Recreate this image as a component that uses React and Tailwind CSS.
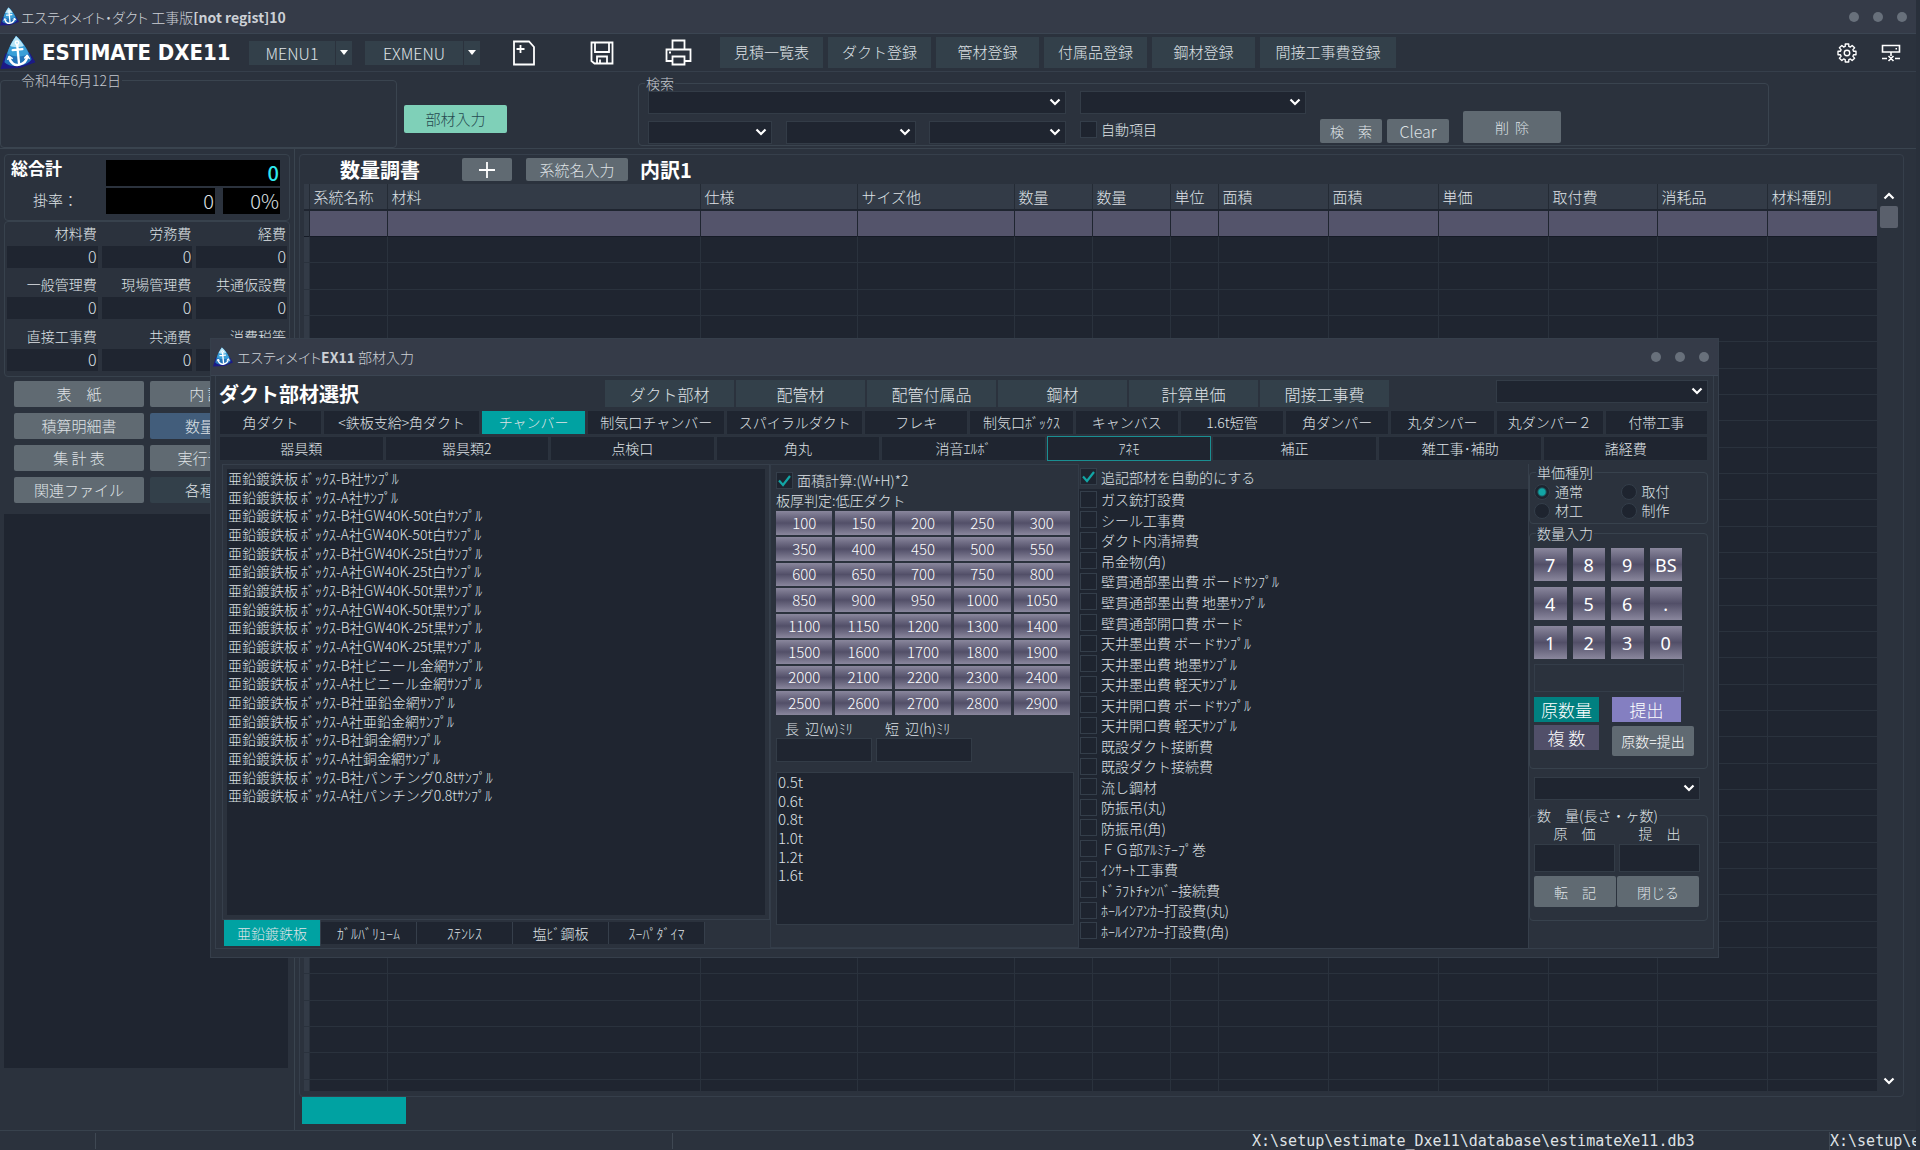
import { useState } from "react";

const MAIN_BUTTONS = [
  { label: "見積一覧表", width: "w-[103px]" },
  { label: "ダクト登録", width: "w-[103px]" },
  { label: "管材登録", width: "w-[103px]" },
  { label: "付属品登録", width: "w-[103px]" },
  { label: "鋼材登録", width: "w-[103px]" },
  { label: "間接工事費登録", width: "w-[136px]" },
];

const COLUMNS = [
  { label: "系統名称", width: "w-[78px]" },
  { label: "材料", width: "" },
  { label: "仕様", width: "w-[157px]" },
  { label: "サイズ他", width: "w-[157px]" },
  { label: "数量", width: "w-[78px]" },
  { label: "数量", width: "w-[78px]" },
  { label: "単位", width: "w-[48px]" },
  { label: "面積", width: "w-[110px]" },
  { label: "面積", width: "w-[110px]" },
  { label: "単価", width: "w-[110px]" },
  { label: "取付費", width: "w-[109px]" },
  { label: "消耗品", width: "w-[110px]" },
  { label: "材料種別", width: "w-[110px]" },
];

const COSTS = [
  "材料費", "労務費", "経費",
  "一般管理費", "現場管理費", "共通仮設費",
  "直接工事費", "共通費", "消費税等",
];

const SIDE_BUTTONS = [
  { label: "表　紙", color: "bg-[#606a72]" },
  { label: "内 訳 書", color: "bg-[#606a72]" },
  { label: "積算明細書", color: "bg-[#606a72]" },
  { label: "数量調書", color: "bg-[#425d7b]" },
  { label: "集 計 表", color: "bg-[#606a72]" },
  { label: "実行予算書", color: "bg-[#606a72]" },
  { label: "関連ファイル", color: "bg-[#606a72]" },
  { label: "各種設定", color: "bg-[#33404a]" },
];

const CATEGORIES = ["ダクト部材", "配管材", "配管付属品", "鋼材", "計算単価", "間接工事費"];

const PART_TABS = [
  "角ダクト", "<鉄板支給>角ダクト", "チャンバー", "制気口チャンバー", "スパイラルダクト", "フレキ",
  "制気口ﾎﾞｯｸｽ", "キャンバス", "1.6t短管", "角ダンパー", "丸ダンパー", "丸ダンパー２", "付帯工事",
];

const SUB_TABS = ["器具類", "器具類2", "点検口", "角丸", "消音ｴﾙﾎﾞ", "ｱﾈﾓ", "補正", "雑工事･補助", "諸経費"];

const PARTS = [
  "亜鉛鍍鉄板 ﾎﾞｯｸｽ-B社ｻﾝﾌﾟﾙ",
  "亜鉛鍍鉄板 ﾎﾞｯｸｽ-A社ｻﾝﾌﾟﾙ",
  "亜鉛鍍鉄板 ﾎﾞｯｸｽ-B社GW40K-50t白ｻﾝﾌﾟﾙ",
  "亜鉛鍍鉄板 ﾎﾞｯｸｽ-A社GW40K-50t白ｻﾝﾌﾟﾙ",
  "亜鉛鍍鉄板 ﾎﾞｯｸｽ-B社GW40K-25t白ｻﾝﾌﾟﾙ",
  "亜鉛鍍鉄板 ﾎﾞｯｸｽ-A社GW40K-25t白ｻﾝﾌﾟﾙ",
  "亜鉛鍍鉄板 ﾎﾞｯｸｽ-B社GW40K-50t黒ｻﾝﾌﾟﾙ",
  "亜鉛鍍鉄板 ﾎﾞｯｸｽ-A社GW40K-50t黒ｻﾝﾌﾟﾙ",
  "亜鉛鍍鉄板 ﾎﾞｯｸｽ-B社GW40K-25t黒ｻﾝﾌﾟﾙ",
  "亜鉛鍍鉄板 ﾎﾞｯｸｽ-A社GW40K-25t黒ｻﾝﾌﾟﾙ",
  "亜鉛鍍鉄板 ﾎﾞｯｸｽ-B社ビニール金網ｻﾝﾌﾟﾙ",
  "亜鉛鍍鉄板 ﾎﾞｯｸｽ-A社ビニール金網ｻﾝﾌﾟﾙ",
  "亜鉛鍍鉄板 ﾎﾞｯｸｽ-B社亜鉛金網ｻﾝﾌﾟﾙ",
  "亜鉛鍍鉄板 ﾎﾞｯｸｽ-A社亜鉛金網ｻﾝﾌﾟﾙ",
  "亜鉛鍍鉄板 ﾎﾞｯｸｽ-B社銅金網ｻﾝﾌﾟﾙ",
  "亜鉛鍍鉄板 ﾎﾞｯｸｽ-A社銅金網ｻﾝﾌﾟﾙ",
  "亜鉛鍍鉄板 ﾎﾞｯｸｽ-B社パンチング0.8tｻﾝﾌﾟﾙ",
  "亜鉛鍍鉄板 ﾎﾞｯｸｽ-A社パンチング0.8tｻﾝﾌﾟﾙ",
];

const MATERIALS = ["亜鉛鍍鉄板", "ｶﾞﾙﾊﾞﾘｭｰﾑ", "ｽﾃﾝﾚｽ", "塩ﾋﾞ鋼板", "ｽｰﾊﾟﾀﾞｲﾏ"];

const SIZES = [
  100, 150, 200, 250, 300, 350, 400, 450, 500, 550, 600, 650, 700, 750, 800, 850, 900, 950, 1000, 1050,
  1100, 1150, 1200, 1300, 1400, 1500, 1600, 1700, 1800, 1900, 2000, 2100, 2200, 2300, 2400, 2500, 2600,
  2700, 2800, 2900,
];

const THICKNESSES = ["0.5t", "0.6t", "0.8t", "1.0t", "1.2t", "1.6t"];

const EXTRAS = [
  "ガス銃打設費", "シール工事費", "ダクト内清掃費", "吊金物(角)",
  "壁貫通部墨出費 ボードｻﾝﾌﾟﾙ", "壁貫通部墨出費 地墨ｻﾝﾌﾟﾙ", "壁貫通部開口費 ボード",
  "天井墨出費 ボードｻﾝﾌﾟﾙ", "天井墨出費 地墨ｻﾝﾌﾟﾙ", "天井墨出費 軽天ｻﾝﾌﾟﾙ",
  "天井開口費 ボードｻﾝﾌﾟﾙ", "天井開口費 軽天ｻﾝﾌﾟﾙ",
  "既設ダクト接断費", "既設ダクト接続費", "流し鋼材", "防振吊(丸)", "防振吊(角)",
  "ＦＧ部ｱﾙﾐﾃｰﾌﾟ巻", "ｲﾝｻｰﾄ工事費", "ﾄﾞﾗﾌﾄﾁｬﾝﾊﾞｰ接続費",
  "ﾎｰﾙｲﾝｱﾝｶｰ打設費(丸)", "ﾎｰﾙｲﾝｱﾝｶｰ打設費(角)",
];

const KEYS = ["7", "8", "9", "BS", "4", "5", "6", ".", "1", "2", "3", "0"];

const gearPath = (() => {
  const points = [];
  for (let i = 0; i < 8; i++) {
    const mid = (i * Math.PI) / 4;
    [[-0.27, 7.4], [-0.19, 10], [0.19, 10], [0.27, 7.4]].forEach(([offset, r]) => {
      const x = 12 + r * Math.sin(mid + offset);
      const y = 12 - r * Math.cos(mid + offset);
      points.push(`${x.toFixed(2)} ${y.toFixed(2)}`);
    });
  }
  return `M${points.join("L")}Z`;
})();

const Logo = ({ className }) => (
  <svg viewBox="0 0 36 34" className={className} aria-hidden="true">
    <path d="M5 18 0 34 20 33 36 27 30 17Z" fill="#1c1a86" />
    <path d="M16 0C22 5 29 15 32 24 28 31 11 34 4 27 6 17 11 7 16 0Z" fill="#2273b9" />
    <path d="M16 0C21 4 26 11 29 18 24 22 13 22 7 18 9 11 12 5 16 0Z" fill="#3a9fd8" />
    <path d="M16 0C19 3 22 6 24 10 20 12 13 12 10 10 12 6 14 3 16 0Z" fill="#b4e4f7" />
    <g fill="none" stroke="#fff" strokeLinecap="round" strokeLinejoin="round">
      <circle cx="17" cy="7" r="1.8" strokeWidth="1.5" />
      <path d="M17.200 9.500 19 28M12.500 14.500 22.500 13.500" strokeWidth="2.400" />
      <path d="M9 22C10 28 15 31 19.500 29.500 24 28.500 27 25 27.500 21" strokeWidth="2.600" />
      <path d="M7.500 24 9 21 12 23M25 22.500 27.500 20 29.500 23" strokeWidth="1.600" />
    </g>
  </svg>
);

const Dots = () => (
  <div className="flex gap-[14px]">
    {["最小化", "最大化", "閉じる"].map((name) => (
      <button key={name} type="button" aria-label={name} className="size-[10px] rounded-full bg-[#68707b]" />
    ))}
  </div>
);

const Chevron = ({ className = "", up = false }) => (
  <svg viewBox="0 0 12 8" className={`h-2 w-3 ${className}`} fill="none" stroke="#fff" strokeWidth="2.2" aria-hidden="true">
    <path d={up ? "M1.500 6.500 6 2 10.500 6.500" : "M1.500 1.500 6 6 10.500 1.500"} />
  </svg>
);

const DarkSelect = ({ label, className }) => (
  <div className={`relative h-[23px] ${className}`}>
    <select aria-label={label} className="block h-full w-full appearance-none border border-[#333c47] bg-[#1f2530] px-2 text-sm">
      <option value="" />
    </select>
    <Chevron className="pointer-events-none absolute right-[5px] top-[7px]" />
  </div>
);

const Check = ({ label, checked, onChange, className = "" }) => (
  <label className={`flex items-center gap-1 whitespace-nowrap text-sm leading-[18px] ${className}`}>
    <span className="relative size-[17px] shrink-0">
      <input
        type="checkbox"
        checked={checked}
        onChange={onChange}
        className="block size-full appearance-none border border-[#343e4a] bg-[#1e242f]"
      />
      {checked && (
        <svg viewBox="0 0 17 17" className="pointer-events-none absolute inset-0" fill="none" stroke="#12a5a5" strokeWidth="2.2" aria-hidden="true">
          <path d="M3 8.500 7 13 14 4" />
        </svg>
      )}
    </span>
    {label}
  </label>
);

const MenuButton = ({ label, width }) => (
  <button type="button" className={`flex h-6 items-center bg-[#33404a] text-base leading-[22px] ${width}`}>
    <span className="flex-1 text-center">{label}</span>
    <span className="flex h-full w-[17px] items-center justify-center border-l border-[#2b323d]">
      <svg viewBox="0 0 8 5" className="h-[5px] w-2" fill="#fff" aria-hidden="true"><path d="M0 0h8L4 5z" /></svg>
    </span>
  </button>
);

const GrayButton = ({ children, className = "" }) => (
  <button type="button" className={`rounded-[2px] bg-[#606a72] text-center whitespace-pre ${className}`}>{children}</button>
);

const TopBar = () => (
  <>
    <header className="flex h-[34px] shrink-0 items-center border-b border-[#3b4552] bg-[#353b48] pr-[9px]">
      <Logo className="mr-[2px] h-[19px] w-[19px]" />
      <h1 className="flex-1 text-sm text-[#ccd0d6] [font-feature-settings:'palt']">
        エスティメイト・ダクト 工事版<b className="font-bold">[not regist]10</b>
      </h1>
      <Dots />
    </header>
    <nav className="flex h-[38px] shrink-0 items-center border-b border-[#363f4b]">
      <Logo className="h-[33px] w-9" />
      <span className="ml-[6px] w-[207px] whitespace-nowrap font-['DejaVu_Sans_Condensed','DejaVu_Sans',sans-serif] text-[22px] font-bold leading-7 text-white">ESTIMATE DXE11</span>
      <MenuButton label="MENU1" width="w-[103px]" />
      <MenuButton label="EXMENU" width="ml-[13px] w-[115px]" />
      <button type="button" aria-label="新規" className="ml-[33px]">
        <svg viewBox="0 0 22 26" className="h-[26px] w-[22px]" fill="none" stroke="#fff" strokeWidth="1.8" aria-hidden="true">
          <path d="M1 1.500H16L21 7V24.500H1ZM7.500 5V13M3.500 9H11.500" />
        </svg>
      </button>
      <button type="button" aria-label="保存" className="ml-[55px]">
        <svg viewBox="0 0 24 24" className="size-6" fill="none" stroke="#fff" strokeWidth="1.800" aria-hidden="true">
          <path d="M1.500 1.500H22.500V22.500H4.500L1.500 20ZM5 1.500V11H19V1.500M7 22.500V15.500H17V22.500M10 18.500V22.500" />
        </svg>
      </button>
      <button type="button" aria-label="印刷" className="ml-[51px]">
        <svg viewBox="0 0 27 27" className="size-[27px]" fill="none" stroke="#fff" strokeWidth="1.800" aria-hidden="true">
          <path d="M7.500 10.500V1.500H19.500V10.500M7.500 22H1.500V10.500H25.500V22H19.500M7.500 17.500H19.500V25.500H7.500ZM4 13.500H6" />
        </svg>
      </button>
      <div className="ml-7 flex gap-[5px]">
        {MAIN_BUTTONS.map((b) => (
          <button key={b.label} type="button" className={`h-[31px] bg-[#33404a] text-[15px] ${b.width}`}>{b.label}</button>
        ))}
      </div>
      <button type="button" aria-label="設定" className="ml-auto">
        <svg viewBox="0 0 24 24" className="size-[22px]" fill="none" stroke="#fff" strokeWidth="1.500" strokeLinejoin="round" aria-hidden="true">
          <path d={gearPath} />
          <circle cx="12" cy="12" r="3" />
        </svg>
      </button>
      <button type="button" aria-label="接続" className="ml-[23px] mr-[15px]">
        <svg viewBox="0 0 20 18" className="h-[18px] w-5" fill="none" stroke="#fff" strokeWidth="1.600" aria-hidden="true">
          <path d="M1.500 1.500H18.500V8H1.500ZM10 8V12M1 14.500H6M14 14.500H19M7.500 12 12.500 17M12.500 12 7.500 17M14.500 4.800H16" />
        </svg>
      </button>
    </nav>
  </>
);

const SearchBar = () => (
  <section className="flex h-[77px] shrink-0 items-start border-b border-[#3a444f]">
    <fieldset className="h-[76px] w-[397px] rounded-sm border border-[#3a444f]">
      <legend className="ml-[19px] px-px text-sm leading-4 text-[#c3c8ce]">令和4年6月12日</legend>
    </fieldset>
    <button type="button" className="ml-[7px] mt-[33px] h-7 w-[103px] rounded-[2px] bg-[#7fd0b8] text-[15px] text-[#264a50]">部材入力</button>
    <fieldset className="ml-[131px] mt-[3px] h-[71px] w-[1131px] rounded-sm border border-[#3a444f]">
      <legend className="ml-[6px] px-px text-sm leading-4 text-[#c3c8ce]">検索</legend>
      <div className="flex pl-[9px]">
        <div className="w-[418px]">
          <DarkSelect label="検索条件" className="w-full" />
          <div className="mt-[7px] flex justify-between">
            <DarkSelect label="条件1" className="w-[124px]" />
            <DarkSelect label="条件2" className="w-[130px]" />
            <DarkSelect label="条件3" className="w-[137px]" />
          </div>
        </div>
        <div className="ml-[14px] w-[226px]">
          <DarkSelect label="分類" className="w-full" />
          <Check label="自動項目" checked={false} onChange={() => {}} className="mt-[6px]" />
        </div>
        <GrayButton className="ml-[14px] mt-7 h-6 w-[62px] text-sm">検　索</GrayButton>
        <GrayButton className="ml-[5px] mt-7 h-6 w-[62px] text-base leading-5">Clear</GrayButton>
        <GrayButton className="ml-[14px] mt-5 h-8 w-[98px] text-sm">削  除</GrayButton>
      </div>
    </fieldset>
  </section>
);

const Sidebar = () => (
  <aside className="flex w-[295px] shrink-0 flex-col border-r border-[#3a444f] px-1 pb-[62px] pt-[5px]">
    <div className="flex h-[67px] w-[286px] justify-between rounded-sm border border-[#38424d] pl-[6px] pr-[9px] pt-[5px]">
      <div>
        <div className="text-[17px] font-bold leading-4 text-white">総合計</div>
        <div className="ml-[22px] mt-3 text-[15px] leading-6">掛率：</div>
      </div>
      <div className="w-[174px] text-xl leading-[26px]">
        <div className="bg-black px-px text-right font-medium text-[#2fe9ee]">0</div>
        <div className="mt-[2px] flex justify-between">
          <div className="w-[109px] bg-black px-px text-right">0</div>
          <div className="w-[57px] bg-black px-px text-right">0%</div>
        </div>
      </div>
    </div>
    <dl className="grid h-[156px] w-[286px] grid-cols-3 gap-x-1 rounded-sm border border-[#38424d] px-[2px]">
      {COSTS.map((name) => (
        <div key={name}>
          <dt className="pb-[2px] pr-px text-right text-sm leading-[22px]">{name}</dt>
          <dd className="h-[22px] bg-[#1f2530] px-px text-right text-base leading-5">0</dd>
        </div>
      ))}
    </dl>
    <div className="mt-1 grid grid-cols-[130px_130px] gap-[6px] pl-[10px]">
      {SIDE_BUTTONS.map((b) => (
        <button key={b.label} type="button" className={`h-[26px] rounded-[2px] text-[15px] whitespace-pre ${b.color}`}>{b.label}</button>
      ))}
    </div>
    <div className="mt-[11px] w-[284px] flex-1 bg-[#1f2530]" />
  </aside>
);

const Ledger = () => (
  <main className="flex min-w-0 flex-1 flex-col px-1 pb-[6px] pt-[5px]">
    <section className="mr-[8px] flex min-h-0 flex-1 flex-col rounded-sm border border-[#363f4b] pl-1 pr-[5px]">
      <div className="flex h-[29px] shrink-0 items-center">
        <h2 className="ml-9 w-[122px] text-xl font-bold leading-6 text-white">数量調書</h2>
        <button type="button" aria-label="追加" className="flex h-[23px] w-[50px] items-center justify-center rounded-[2px] bg-[#606a72]">
          <svg viewBox="0 0 16 16" className="size-4" stroke="#fff" strokeWidth="1.800" aria-hidden="true"><path d="M8 0V16M0 8H16" /></svg>
        </button>
        <GrayButton className="ml-[14px] h-[23px] w-[102px] text-[15px] leading-[22px]">系統名入力</GrayButton>
        <h2 className="ml-3 text-xl font-bold leading-6 text-white">内訳1</h2>
      </div>
      <div className="flex min-h-0 flex-1">
        <div className="mb-[5px] min-w-0 flex-1 overflow-hidden bg-[#1f2530]">
          <table className="w-full table-fixed border-collapse">
            <thead>
              <tr className="h-[26px] border-b-2 border-[#1f2530] bg-[#333b47]">
                <th className="w-[5px]" />
                {COLUMNS.map((c, i) => (
                  <th key={i} className={`border-l border-[#242b35] px-1 text-left text-[15px] font-light leading-6 ${c.width}`}>{c.label}</th>
                ))}
              </tr>
            </thead>
            <tbody>
              <tr className="h-[26px] border-b border-[#151b26] bg-[#54546b]">
                <td className="bg-[#333b47]" />
                {COLUMNS.map((c, i) => (
                  <td key={i} className="border-l border-[#1f2530]" />
                ))}
              </tr>
              {Array.from({ length: 33 }, (_, row) => (
                <tr key={row} className="h-[26px] border-b border-[#2a323d] nth-[3n]:h-[27px]">
                  <td className="bg-[#333b47]" />
                  {COLUMNS.map((c, i) => (
                    <td key={i} className="border-l border-[#2a323d]" />
                  ))}
                </tr>
              ))}
            </tbody>
          </table>
        </div>
        <div className="ml-[3px] flex w-[18px] shrink-0 flex-col items-center pb-[11px] pt-2">
          <Chevron up />
          <div className="mt-[6px] h-[22px] w-full rounded-[2px] bg-[#5a606c]" />
          <Chevron className="mt-auto" />
        </div>
      </div>
    </section>
    <button type="button" aria-label="内訳1" className="ml-[3px] h-[27px] w-[104px] shrink-0 bg-[#00a2a2]" />
  </main>
);

const tabBase = "h-[25px] border text-center text-sm leading-[21px] whitespace-nowrap";

const PartTabs = () => {
  const [part, setPart] = useState("チャンバー");
  const [sub, setSub] = useState("ｱﾈﾓ");

  return (
    <>
      <div className="grid grid-cols-[104fr_158fr_106fr_139fr_138fr_105fr_105fr_105fr_105fr_105fr_105fr_109fr_104fr] gap-x-px">
        {PART_TABS.map((t) => (
          <button key={t} type="button" onClick={() => setPart(t)} className={`${tabBase} border-[#2b333e] ${t === part ? "bg-[#00a2a2]" : "bg-[#1f2530]"}`}>
            {t}
          </button>
        ))}
      </div>
      <div className="mt-px grid grid-cols-9 gap-x-px">
        {SUB_TABS.map((t) => (
          <button key={t} type="button" onClick={() => setSub(t)} className={`${tabBase} bg-[#1f2530] ${t === sub ? "border-[#1a8f92]" : "border-[#2b333e]"}`}>
            {t}
          </button>
        ))}
      </div>
    </>
  );
};

const PartList = () => (
  <section className="w-[548px] shrink-0">
    <div className="h-[456px] border border-[#363f4b] p-1">
      <ul className="h-full bg-[#1f2530] pl-px">
        <li className="grid h-[336px] auto-rows-fr">
          {PARTS.map((p) => (
            <span key={p} className="text-sm leading-[18px]">{p}</span>
          ))}
        </li>
      </ul>
    </div>
    <div className="ml-[2px] flex items-center">
      {MATERIALS.map((m, i) => (
        <button
          key={m}
          type="button"
          className={`border-r border-[#363f4b] text-sm leading-[18px] whitespace-nowrap ${i === 0 ? "h-[26px] w-[97px] bg-[#00a2a2]" : "h-[22px] w-24 bg-[#1f2530]"}`}
        >
          {m}
        </button>
      ))}
    </div>
  </section>
);

const silver = "bg-linear-to-b from-[#8a879d] via-[#524f68] to-[#8a879d]";

const SizePanel = () => {
  const [calcArea, setCalcArea] = useState(true);

  return (
    <section className="w-[309px] shrink-0 border border-[#333c48] pl-[5px] pr-1 pt-[6px]">
      <Check label="面積計算:(W+H)*2" checked={calcArea} onChange={() => setCalcArea(!calcArea)} />
      <p className="mt-px text-sm leading-5">板厚判定:低圧ダクト</p>
      <div className="mt-px grid h-[204px] w-[294px] grid-cols-5 grid-rows-8 gap-x-[3px] gap-y-[2px]">
        {SIZES.map((s) => (
          <button key={s} type="button" className={`text-[15px] leading-5 text-white ${silver}`}>{s}</button>
        ))}
      </div>
      <div className="mt-[3px] flex gap-[4px] text-sm leading-5 whitespace-pre">
        <label className="w-[96px]">
          <span className="ml-[9px]">長  辺(w)ﾐﾘ</span>
          <input type="text" className="block h-6 w-full border border-[#333c47] bg-[#1f2530] px-1" />
        </label>
        <label className="w-[96px]">
          <span className="ml-[9px]">短  辺(h)ﾐﾘ</span>
          <input type="text" className="block h-6 w-full border border-[#333c47] bg-[#1f2530] px-1" />
        </label>
      </div>
      <ul className="mt-[10px] h-[153px] border border-[#333c47] bg-[#1f2530] pl-px">
        <li className="grid h-28 auto-rows-fr">
          {THICKNESSES.map((t) => (
            <span key={t} className="text-[15px] leading-[18px]">{t}</span>
          ))}
        </li>
      </ul>
    </section>
  );
};

const ExtrasPanel = () => {
  const [auto, setAuto] = useState(true);
  const [picked, setPicked] = useState([]);

  const toggle = (name) =>
    setPicked((prev) => (prev.includes(name) ? prev.filter((p) => p !== name) : [...prev, name]));

  return (
    <section className="flex min-w-0 flex-1 flex-col">
      <Check label="追記部材を自動的にする" checked={auto} onChange={() => setAuto(!auto)} className="h-[25px] pl-px" />
      <div className="flex-1 bg-[#1f2530] pl-px">
        <div className="grid h-[452px] auto-rows-fr">
          {EXTRAS.map((e) => (
            <Check key={e} label={e} checked={picked.includes(e)} onChange={() => toggle(e)} />
          ))}
        </div>
      </div>
    </section>
  );
};

const PriceKind = () => {
  const [kind, setKind] = useState("通常");

  return (
    <fieldset className="h-[60px] rounded-sm border border-[#38424d]">
      <legend className="ml-[6px] px-px text-sm leading-4">単価種別</legend>
      <div className="grid grid-cols-2 pl-1 pt-[2px]">
        {["通常", "取付", "材工", "制作"].map((k) => (
          <label key={k} className="flex items-center gap-[5px] text-sm leading-[19px]">
            <input
              type="radio"
              name="kind"
              checked={kind === k}
              onChange={() => setKind(k)}
              className="size-4 appearance-none rounded-full border border-[#343e4a] bg-[#1e242f] checked:bg-[radial-gradient(#12a5a5_0_3px,#1e242f_5px)]"
            />
            {k}
          </label>
        ))}
      </div>
    </fieldset>
  );
};

const EntryPanel = () => (
  <section className="w-[180px] shrink-0 border-l border-[#363f4b]">
    <PriceKind />
    <fieldset className="mt-px h-[244px] rounded-sm border border-[#38424d]">
      <legend className="ml-[6px] px-px text-sm leading-4">数量入力</legend>
      <div className="ml-1 mt-[7px] grid w-[148px] grid-cols-4 gap-x-[6px] gap-y-[6px]">
        {KEYS.map((k) => (
          <button key={k} type="button" className={`h-[33px] font-['Noto_Sans',sans-serif] text-lg font-normal text-white ${silver}`}>{k}</button>
        ))}
      </div>
      <div className="ml-1 mt-[5px] h-7 w-[150px] border border-[#343d49]" />
      <div className="ml-1 mt-[5px] flex gap-[13px] text-[17px] leading-6 text-white">
        <div className="flex w-[65px] flex-col gap-[3px]">
          <button type="button" className="h-[25px] bg-[#008080]">原数量</button>
          <button type="button" className="h-[25px] bg-[#514f69]">複 数</button>
        </div>
        <div className="flex flex-col items-start gap-1">
          <button type="button" className="h-[25px] w-[69px] bg-[#847fc1]">提出</button>
          <GrayButton className="h-[30px] w-[82px] text-sm">原数=提出</GrayButton>
        </div>
      </div>
    </fieldset>
    <DarkSelect label="数量区分" className="ml-[5px] mt-[8px] w-[166px]" />
    <fieldset className="mt-[7px] h-[114px] rounded-sm border border-[#38424d]">
      <legend className="ml-[6px] px-px text-sm leading-4">数　量(長さ・ヶ数)</legend>
      <div className="ml-1 flex w-[166px] gap-1 text-center text-sm leading-[21px]">
        <label className="flex-1">
          原　価
          <input type="text" className="block h-7 w-full border border-[#333c47] bg-[#1f2530] px-1" />
        </label>
        <label className="flex-1">
          提　出
          <input type="text" className="block h-7 w-full border border-[#333c47] bg-[#1f2530] px-1" />
        </label>
      </div>
      <div className="ml-1 mt-1 flex gap-px text-sm">
        <GrayButton className="h-[31px] w-[82px]">転　記</GrayButton>
        <GrayButton className="h-[31px] w-[82px]">閉じる</GrayButton>
      </div>
    </fieldset>
  </section>
);

const PartsDialog = () => (
  <div role="dialog" aria-label="部材入力" className="absolute left-[210px] top-[338px] w-[1509px] border border-[#363f4b] bg-[#2b323d]">
    <header className="flex h-[37px] items-center border-b border-[#3b4552] bg-[#353b48] pl-[2px] pr-[9px]">
      <Logo className="mr-1 size-5" />
      <h2 className="flex-1 text-sm leading-[18px] text-[#ccd0d6] [font-feature-settings:'palt']">
        エスティメイト<b className="font-bold">EX11</b> 部材入力
      </h2>
      <Dots />
    </header>
    <div className="mx-1 mb-2 border-x border-b border-[#363f4b] pl-[3px] pr-[5px] pt-1">
      <div className="mb-[2px] flex h-7 items-start">
        <h3 className="w-[386px] text-xl font-bold leading-[27px] text-white">ダクト部材選択</h3>
        <div className="flex gap-[2px]">
          {CATEGORIES.map((c) => (
            <button key={c} type="button" className="h-[27px] w-[129px] bg-[#33404a] text-base leading-6">{c}</button>
          ))}
        </div>
        <DarkSelect label="部材区分" className="ml-auto w-[212px]" />
      </div>
      <PartTabs />
      <div className="mt-[3px] flex h-[484px] pl-[3px]">
        <PartList />
        <SizePanel />
        <ExtrasPanel />
        <EntryPanel />
      </div>
    </div>
  </div>
);

const StatusBar = () => (
  <footer className="flex h-5 shrink-0 items-center overflow-hidden border-t border-[#38424d] font-['DejaVu_Sans_Mono',monospace] text-[15px] leading-[18px] whitespace-nowrap">
    <div className="h-4 w-24 shrink-0 border-r border-[#3f4853]" />
    <div className="h-4 w-[577px] shrink-0 border-r border-[#3f4853]" />
    <div className="min-w-0 flex-1 pl-[579px]">X:\setup\estimate_Dxe11\database\estimateXe11.db3</div>
    <div className="w-[87px] shrink-0 overflow-hidden border-l border-[#3f4853]">X:\setup\e</div>
  </footer>
);

export default function App() {
  return (
    <div className="relative flex h-screen flex-col overflow-hidden border-r-4 border-[#29303b] bg-[#2b323d] font-['Noto_Sans_CJK_JP',sans-serif] font-light text-[#dfe2e6]">
      <TopBar />
      <SearchBar />
      <div className="flex min-h-0 flex-1">
        <Sidebar />
        <Ledger />
      </div>
      <StatusBar />
      <PartsDialog />
    </div>
  );
}
